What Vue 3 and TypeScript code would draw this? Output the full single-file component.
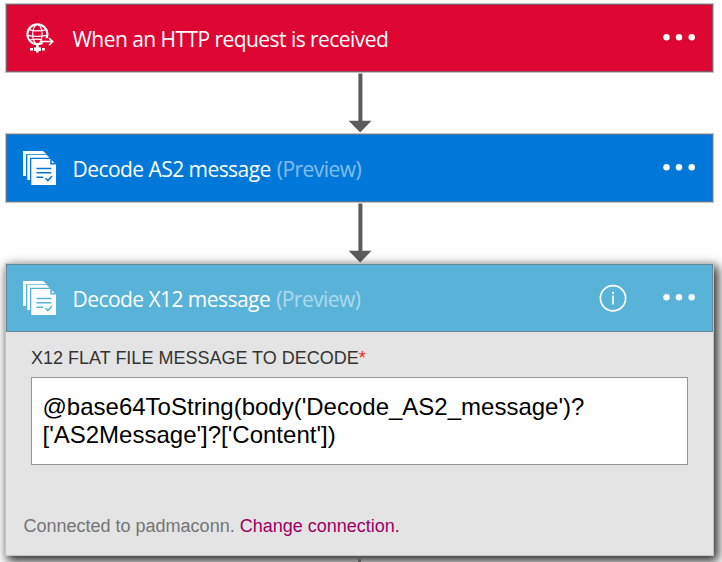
<script setup lang="ts">
interface Step {
  title: string
  preview: boolean
  tone: 'red' | 'blue' | 'sky'
  icon: 'http' | 'docs'
  open: boolean
}

const steps: Step[] = [
  { title: 'When an HTTP request is received', preview: false, tone: 'red', icon: 'http', open: false },
  { title: 'Decode AS2 message', preview: true, tone: 'blue', icon: 'docs', open: false },
  { title: 'Decode X12 message', preview: true, tone: 'sky', icon: 'docs', open: true },
]
</script>

<template>
  <main class="flow">
    <template v-for="(step, i) in steps" :key="step.title">
      <svg v-if="i > 0" class="arrow" width="24" height="60" viewBox="0 0 24 60">
        <path d="M10.4 0.500h4v48h-4z" fill="#5c5c5c" />
        <path d="M0.700 47.800h22.800L12.200 59.500z" fill="#5c5c5c" />
      </svg>
      <section class="card" :class="[step.tone, { open: step.open }]">
        <header class="head">
          <svg v-if="step.icon === 'http'" class="icon" width="36" height="36" viewBox="0 0 36 36" fill="none" stroke="#fff">
            <circle cx="15.4" cy="14.3" r="10" stroke-width="2.1" />
            <ellipse cx="15.4" cy="14.3" rx="4.7" ry="10" stroke-width="1.2" />
            <path d="M7 9.6q8.4 2.5 16.8 0M5.5 15.3q9 2 19.5 0M8 20q7.4-1.900 14 0" stroke-width="1.2" />
            <path d="M20 18.2h13v7H21z" fill="#de0734" stroke="none" />
            <path d="M19 21.600h11.700M27 18l3.800 3.600-3.800 3.600" stroke-width="1.5" />
            <path d="M15.4 24v8.500" stroke-width="2.6" />
            <path d="M8 29.200h14.800" stroke-width="2.600" stroke-dasharray="3 1 7 1 3" />
            <path d="M12 29.200h7" stroke-width="3.600" />
          </svg>
          <svg v-else class="icon" width="36" height="36" viewBox="0 0 36 36">
            <path d="M1 1h20l4 3.500H4V26H1z" fill="#fff" />
            <path class="gap" d="M4.500 4h20l4 3.600H7.500V30h-3z" />
            <path d="M5.300 4.800h19.200l3 3H8V30H5.300z" fill="#fff" />
            <path class="gap" d="M8.500 8.200h21v3H12V35H8.500z" />
            <path d="M9.300 9h19l5.700 5.500V35H9.300z" fill="#fff" />
            <path class="gap" d="M28.200 9v5.600H34l-1.300-1.500h-2.900V10.400z" />
            <path class="mark" d="M14.500 18.600h14.800M14.500 22.700h14.800M14.500 27.200h6.700M23.500 28.300l2.400 2.300 4.100-4.600" />
          </svg>
          <h2 class="title">
            <span class="name">{{ step.title }}</span>
            <span v-if="step.preview" class="preview">(Preview)</span>
          </h2>
          <svg v-if="step.open" class="info" width="28" height="28" viewBox="0 0 28 28">
            <circle cx="14" cy="14.300" r="12.600" fill="none" stroke="#fff" stroke-width="1.700" />
            <path d="M13 7.800h2v1.900h-2zM13.200 11.400h1.600v9.200h-1.600z" fill="#fff" />
          </svg>
          <svg class="dots" width="34" height="8" viewBox="0 0 34 8" fill="#fff">
            <circle cx="4.500" cy="4.300" r="3.200" />
            <circle cx="17" cy="4.300" r="3.200" />
            <circle cx="29.700" cy="4.300" r="3.200" />
          </svg>
        </header>
        <div v-if="step.open" class="body">
          <div class="label">X12 FLAT FILE MESSAGE TO DECODE<span class="star">*</span></div>
          <div class="field">
            <div class="line">@base64ToString(body('Decode_AS2_message')?</div>
            <div class="line">['AS2Message']?['Content'])</div>
          </div>
          <p class="foot">Connected to padmaconn. <a class="link">Change connection.</a></p>
        </div>
      </section>
    </template>
    <div class="tail"></div>
  </main>
</template>

<style>
body {
  margin: 0;
  overflow: hidden;
  background: #fff;
}
</style>

<style scoped>
.flow {
  box-sizing: border-box;
  width: 722px;
  height: 562px;
  overflow: hidden;
  padding: 3px 8px 0 5px;
  display: flex;
  flex-direction: column;
}
.card {
  box-sizing: border-box;
  flex: none;
  border: 1px solid #c3c3c3;
}
.card.open {
  height: 293px;
  background: #e4e4e4;
  box-shadow: 3px 4px 10px 1px rgba(0, 0, 0, 0.85);
}
.head {
  box-sizing: border-box;
  height: 68px;
  display: flex;
  align-items: center;
  padding: 0 16px 0 15px;
  border: 1px solid rgba(105, 120, 130, 0.75);
}
.red .head { background: #de0734; }
.blue .head { background: #0078d9; }
.sky .head { background: #59b3d9; }
.icon { flex: none; }
.blue .gap { fill: #0078d9; }
.sky .gap { fill: #59b3d9; }
.mark { fill: none; stroke-width: 1.5; }
.blue .mark { stroke: #0078d9; }
.sky .mark { stroke: #59b3d9; }
.title {
  flex: 1;
  display: flex;
  gap: 6px;
  margin: 2px 0 0 14.500px;
  color: #fff;
  font: 400 21px/30px "Open Sans", "Noto Sans", sans-serif;
  white-space: nowrap;
  letter-spacing: -0.55px;
}
.preview { opacity: 0.5; }
.info { flex: none; margin-right: 35px; }
.dots { flex: none; position: relative; top: -1px; }
.arrow {
  flex: none;
  margin-left: 343px;
}
.body {
  padding: 15px 25px 0;
  font-family: "Liberation Sans", Arial, sans-serif;
}
.label {
  font-size: 18px;
  line-height: 22px;
  color: #333;
}
.star { color: #f0281e; }
.field {
  box-sizing: border-box;
  height: 88px;
  margin-top: 8px;
  padding: 15px 10.500px;
  border: 1px solid #969696;
  background: #fff;
  color: #000;
  font-size: 24px;
  line-height: 28px;
  white-space: nowrap;
}
.foot {
  margin: 50px 0 0 -7.500px;
  font-size: 18px;
  line-height: 22px;
  color: #757575;
}
.link { color: #9b0062; }
.tail {
  flex: none;
  position: relative;
  width: 3px;
  height: 6px;
  margin-left: 353px;
  background: #5c5c5c;
}
</style>
